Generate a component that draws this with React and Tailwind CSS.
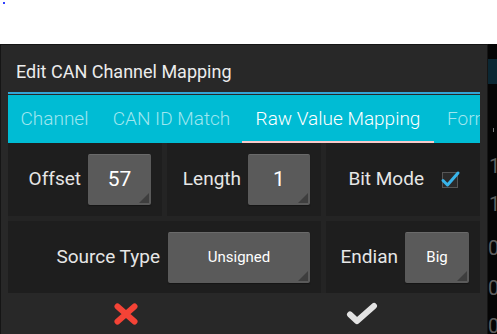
function ValueBox({ w, text, small }) {
  return (
    <div
      className={`relative ${w} h-[51px] rounded-[2px] bg-[#5a5a5a] border-t border-t-[#6a6a6a] shadow-[0_1px_1px_#151515] flex items-center justify-center text-white ${small ? "text-[15px]" : "text-[21px]"}`}
    >
      {text}
      <div className="absolute bottom-[2px] right-[2px] w-0 h-0 border-l-[10px] border-l-transparent border-b-[10px] border-b-[#3e3e3e]" />
    </div>
  );
}

function Label({ children }) {
  return <span className="text-[19px] text-[#e6e6e6]">{children}</span>;
}

function Tab({ w, label, active }) {
  return (
    <div className={`relative h-full shrink-0 flex items-center justify-center ${w}`}>
      <span className={`text-[19px] font-light whitespace-nowrap ${active ? "text-white" : "text-[#9fe6ef]"}`}>
        {label}
      </span>
      {active && <div className="absolute left-0 right-0 bottom-0 h-[2px] bg-[#f7c9c9]" />}
    </div>
  );
}

export default function App() {
  return (
    <div className="relative w-[497px] h-[334px] overflow-hidden bg-white font-['Roboto','Liberation_Sans',sans-serif]">
      <div className="absolute left-[3px] top-[2px] w-[2px] h-[2px] bg-[#3040ff]" />
      <div className="h-[44px]" />
      <div className="flex h-[290px]">
        {/* dialog */}
        <div className="w-[488px] h-full border-t border-l border-r border-[#151515] bg-[#282828] flex flex-col">
          <div className="h-[47px] pl-[15px] flex items-center pt-[5px]">
            <span className="text-[18px] text-[#ececec]">Edit CAN Channel Mapping</span>
          </div>
          <div className="mx-[7px] h-[2px] bg-[#33a6d6]" />
          <div className="mx-[7px] mt-px h-[48px] bg-[#00bcd4] flex overflow-hidden">
            <Tab w="w-[93px]" label="Channel" />
            <Tab w="w-[141px]" label="CAN ID Match" />
            <Tab w="w-[192px]" label="Raw Value Mapping" active />
            <div className="h-full flex items-center pl-[13px] shrink-0">
              <span className="text-[19px] font-light text-[#9fe6ef] whitespace-nowrap">Format</span>
            </div>
          </div>

          <div className="mx-[7px] grid grid-cols-3 grid-rows-[73px_72px] gap-[5px] bg-[#242424]">
            <div className="bg-[#1e1e1e] flex items-center justify-end gap-[7px] pr-[11px]">
              <Label>Offset</Label>
              <ValueBox w="w-[63px]" text="57" />
            </div>
            <div className="bg-[#1e1e1e] flex items-center justify-end gap-[7px] pr-[11px]">
              <Label>Length</Label>
              <ValueBox w="w-[62px]" text="1" />
            </div>
            <div className="bg-[#1e1e1e] flex items-center justify-end gap-[18px] pr-[22px]">
              <Label>Bit Mode</Label>
              <div className="relative w-[16px] h-[16px] border border-[#555] bg-[#2a2a2a]">
                <svg className="absolute -left-[2px] -top-[4px] w-[20px] h-[20px] overflow-visible" viewBox="0 0 20 20">
                  <path d="M2 11.5 L6.5 16 L17 4" fill="none" stroke="#38b4ea" strokeWidth="3" strokeLinecap="round" strokeLinejoin="round" />
                </svg>
              </div>
            </div>
            <div className="col-span-2 bg-[#1e1e1e] flex items-center justify-end gap-[8px] pr-[11px]">
              <Label>Source Type</Label>
              <ValueBox w="w-[142px]" text="Unsigned" small />
            </div>
            <div className="bg-[#1e1e1e] flex items-center justify-end gap-[7px] pr-[11px]">
              <Label>Endian</Label>
              <ValueBox w="w-[64px]" text="Big" small />
            </div>
          </div>

          <div className="mx-[7px] flex-1 flex">
            <button className="flex-1 flex items-center justify-center">
              <svg width="24" height="22" viewBox="0 0 24 22">
                <path d="M3.5 3.5 L20.5 18.5 M20.5 3.5 L3.5 18.5" stroke="#f44336" strokeWidth="6" strokeLinecap="round" />
              </svg>
            </button>
            <button className="flex-1 flex items-center justify-center">
              <svg width="32" height="23" viewBox="0 0 32 23">
                <path d="M4 12.5 L11 19 L28 4" fill="none" stroke="#e2e2e2" strokeWidth="6" strokeLinecap="round" strokeLinejoin="round" />
              </svg>
            </button>
          </div>
        </div>

        {/* background screen peeking through on the right */}
        <div className="flex-1 h-full bg-[#050505] flex flex-col overflow-hidden text-[20px] leading-[16px] text-[#5e5e5e]">
          <div className="mt-[15px] h-[30px] bg-[#0b2733]" />
          <div className="mt-[44px] ml-[5px] w-px h-[5px] bg-[#777]" />
          <div className="mt-[26px] ml-[1px]">1</div>
          <div className="mt-[22px] ml-[1px]">1</div>
          <div className="mt-[28px]">0</div>
          <div className="mt-[24px]">0</div>
          <div className="mt-[22px]">0</div>
        </div>
      </div>
    </div>
  );
}
